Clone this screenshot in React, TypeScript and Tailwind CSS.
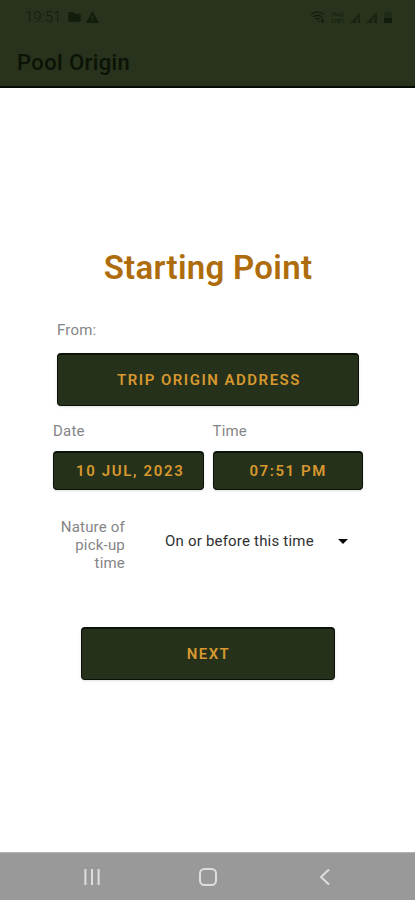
import { useState, type ReactNode } from 'react'

interface ActionButtonProps {
  children: ReactNode
  className?: string
}

function ActionButton({ children, className = '' }: ActionButtonProps) {
  return (
    <button
      type="button"
      className={`flex items-center justify-center rounded border border-t-2 border-[#0b1207] bg-[#26311b] font-semibold text-[#d7982f] shadow-sm ${className}`}
    >
      {children}
    </button>
  )
}

function StatusBar() {
  return (
    <div className="flex h-[34px] items-center justify-between pl-[25px] pr-[23px] text-[#121d0c]">
      <div className="flex items-center">
        <span className="w-[43px] text-[15px] font-light leading-5">19:51</span>
        <svg className="h-3 w-[13px]" viewBox="0 0 13 12" fill="currentColor">
          <path d="M1.2 1h4.3l1.3 1.8h4.9c.6 0 1 .4 1 1v6c0 .6-.4 1-1 1H1.2c-.6 0-1-.4-1-1V2c0-.6.4-1 1-1z" />
        </svg>
        <svg className="ml-[5px] h-3 w-[13px]" viewBox="0 0 13 12" fill="currentColor" fillRule="evenodd">
          <path d="M6.5 0L13 12H0zM5.8 4.2v3.6h1.4V4.2zM5.8 9v1.4h1.4V9z" />
        </svg>
      </div>

      <div className="flex items-center">
        {/* Wi-Fi */}
        <svg className="h-3 w-4" viewBox="0 0 16 12" fill="none" stroke="currentColor" strokeWidth="1.3">
          <path d="M1 3.5C5 .3 10 .3 14 3.5M3 6c3-2.3 6-2.3 9 0M5.2 8.3c1.5-1.1 3-1.1 4.5 0" />
          <path d="M8.5 9.5v1.8M12.5 7v4M11 9.7l1.5 1.6L14 9.7" />
        </svg>
        {/* VoLTE */}
        <div className="ml-1 flex w-4 flex-col items-center text-[6px] font-medium leading-[7px]">
          <span>Vo))</span>
          <span>LTE1</span>
        </div>
        <svg className="ml-1 h-3 w-[11px]" viewBox="0 0 11 12" fill="currentColor">
          <path d="M0 12L10 2v10H8V6.5L6.5 8v4z" opacity=".7" />
        </svg>
        <svg className="ml-[5px] h-3 w-3" viewBox="0 0 12 12" fill="currentColor">
          <path d="M0 12L11 1v11H8V6L6.5 7.5V12z" opacity=".7" />
        </svg>
        <svg className="ml-[6px] h-3 w-2" viewBox="0 0 8 12" fill="currentColor">
          <path d="M2.5 0h3v1H8v6H0V1h2.5z" opacity=".3" />
          <path d="M0 7h8v4c0 .6-.4 1-1 1H1c-.6 0-1-.4-1-1z" />
        </svg>
      </div>
    </div>
  )
}

function NavigationBar() {
  return (
    <nav className="flex h-12 items-center border-t border-[#b4b4b4] bg-[#999999] pl-[84px] text-[#dedede]">
      <svg className="h-4 w-4" viewBox="0 0 16 16" fill="none" stroke="currentColor" strokeWidth="2">
        <path d="M1.4 0v16M8 0v16M14.6 0v16" />
      </svg>
      <svg className="ml-[99px] h-[18px] w-[18px]" viewBox="0 0 18 18" fill="none" stroke="currentColor" strokeWidth="2">
        <rect x="1" y="1" width="16" height="16" rx="4.5" />
      </svg>
      <svg className="ml-[102px] h-[18px] w-3" viewBox="0 0 12 18" fill="none" stroke="currentColor" strokeWidth="2">
        <path d="M10 1.5L2 9l8 7.5" />
      </svg>
    </nav>
  )
}

export default function App() {
  const [pickup] = useState('On or before this time')

  return (
    <div className="flex h-[900px] w-[415px] flex-col bg-white font-['Roboto',sans-serif]">
      <header className="h-[88px] shrink-0 border-b-2 border-[#070b05] bg-[#28321c]">
        <StatusBar />
        <div className="flex h-[54px] items-center pl-[17px] pt-[3px]">
          <h1 className="text-[22px] font-medium leading-7 tracking-[0.4px] text-[#0a1306]">Pool Origin</h1>
        </div>
      </header>

      <main className="flex-1 px-[53px] pt-[160px]">
        <h2 className="pl-px text-center text-[33px] font-semibold leading-10 tracking-[0.3px] text-[#ae6c0c]">
          Starting Point
        </h2>

        {/* Origin */}
        <div className="mt-8 px-1">
          <p className="text-[15px] leading-5 tracking-[0.2px] text-[#858585]">From:</p>
          <ActionButton className="mt-[13px] h-[53px] w-[302px] pl-[2px] pt-px text-[15px] tracking-[1.5px]">
            TRIP ORIGIN ADDRESS
          </ActionButton>
        </div>

        {/* Date and time */}
        <div className="mt-[15px] flex w-[310px] gap-[9px]">
          <div className="flex-1">
            <p className="text-[15px] leading-5 tracking-[0.2px] text-[#858585]">Date</p>
            <ActionButton className="mt-[10px] h-[39px] w-full pl-1 pt-px text-[15px] tracking-[1.65px]">
              10 JUL, 2023
            </ActionButton>
          </div>
          <div className="flex-1">
            <p className="text-[15px] leading-5 tracking-[0.2px] text-[#858585]">Time</p>
            <ActionButton className="mt-[10px] h-[39px] w-full pl-px pt-px text-[15px] tracking-[1.6px]">
              07:51 PM
            </ActionButton>
          </div>
        </div>

        {/* Pick-up preference */}
        <div className="mt-7 flex h-[54px] items-start">
          <p className="w-[72px] text-right text-[15px] leading-[18px] tracking-[0.2px] text-[#858585]">
            Nature of pick-up time
          </p>
          <button
            type="button"
            className="ml-10 mt-[13px] flex w-[183px] items-center justify-between text-[15px] leading-5 tracking-[0.2px] text-[#303030]"
          >
            {pickup}
            <svg className="h-[5px] w-[10px]" viewBox="0 0 10 5" fill="#080808">
              <path d="M0 0h10L5 5z" />
            </svg>
          </button>
        </div>

        <ActionButton className="ml-7 mt-[55px] h-[53px] w-[254px] pl-px pt-px text-[15px] tracking-[1.4px]">NEXT</ActionButton>
      </main>

      <NavigationBar />
    </div>
  )
}
